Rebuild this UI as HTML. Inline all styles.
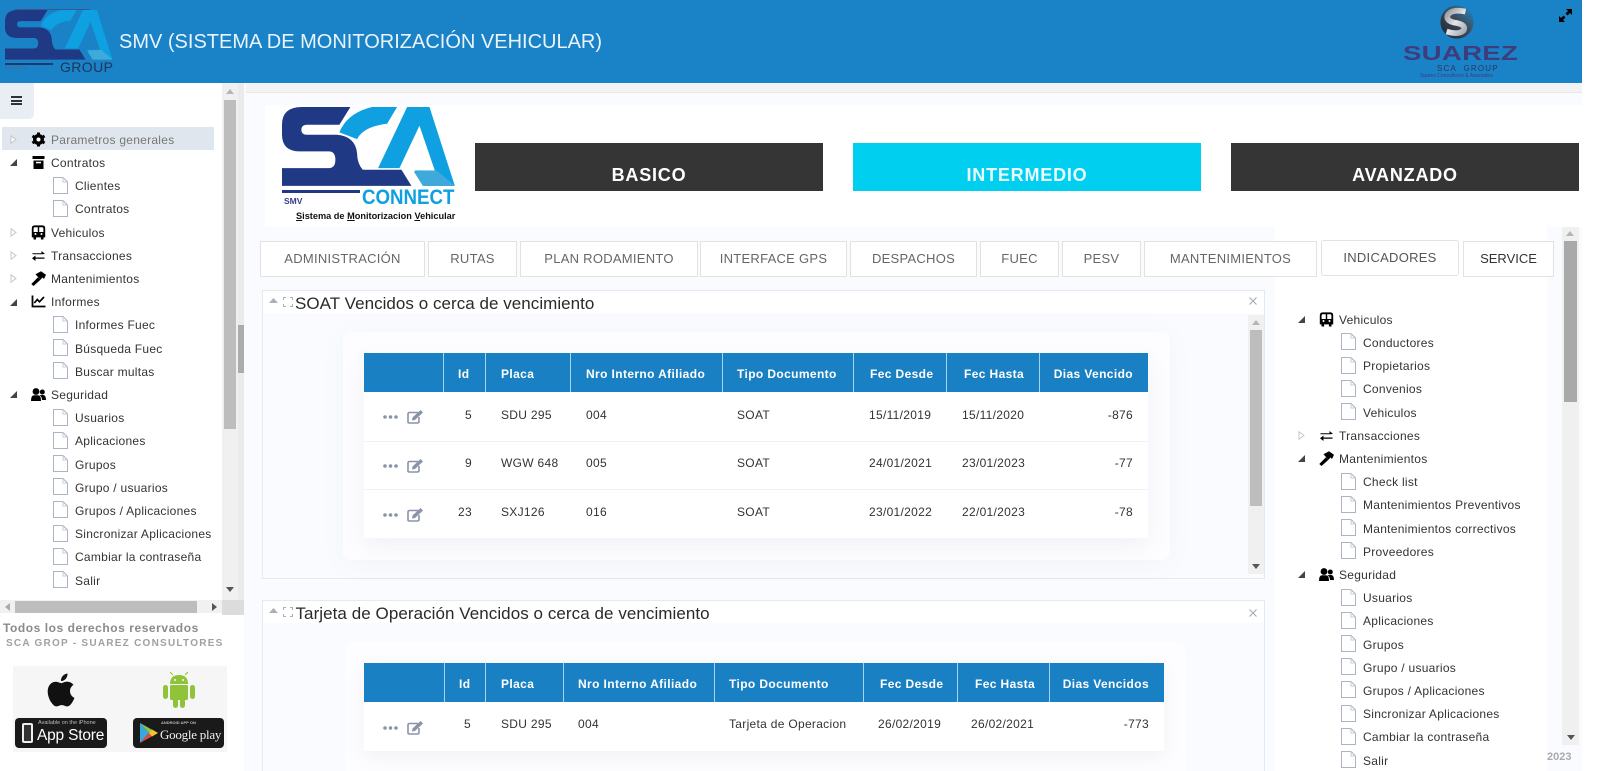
<!DOCTYPE html>
<html lang="es"><head><meta charset="utf-8"><title>SMV</title>
<style>
*{box-sizing:border-box}
html,body{margin:0;padding:0;width:1600px;height:771px;overflow:hidden;background:#fff;font-family:"Liberation Sans",sans-serif;color:#333}
#w{position:relative;width:1600px;height:771px;overflow:hidden}
.b{position:absolute}
.x{position:absolute;white-space:nowrap;line-height:16px}
.tree{position:absolute;top:.8px;width:240px;height:0}
.r{position:absolute;left:0;height:16px;width:240px;font-size:12px;letter-spacing:.27px;line-height:16px;color:#333;white-space:nowrap}
.r svg{position:absolute}
.r .a{left:10px;top:3.500px;width:7px;height:9px}
.r .i{left:31px;top:0;width:15px;height:15px}
.r .f{left:53px;top:-1.500px;width:15px;height:17px}
.r .l{position:absolute;left:51px;top:0}
.r .m{position:absolute;left:75px;top:0}
.tab{position:absolute;top:241px;height:36px;border:1px solid #e2e2e2;background:#fff;color:#666;font-size:13px;letter-spacing:.27px;line-height:34px;text-align:center;white-space:nowrap}
.big{position:absolute;top:143px;height:48px;width:348px;color:#fff;font-weight:bold;font-size:18px;letter-spacing:.8px;text-align:center;padding-top:20px;line-height:24px}
.th{position:absolute;white-space:nowrap;color:#fff;font-weight:bold;font-size:12px;letter-spacing:.38px;line-height:16px}
.td{position:absolute;white-space:nowrap;color:#333;font-size:12px;letter-spacing:.3px;line-height:16px}
.cl{position:absolute;width:1px;background:#a6d3f0}
.ln{position:absolute;height:1px;background:#f1f2f4}
.panel{position:absolute;background:#f9fbfe;border:1px solid #e6e9f0}
.phead{position:absolute;background:#fff}
.title{position:absolute;white-space:nowrap;font-size:17px;color:#2a2a2a;line-height:20px}
</style></head><body>
<div id="w">
<svg width="0" height="0" style="position:absolute">
<defs>
<symbol id="to" viewBox="0 0 7 9"><path d="M0 8L7 1V8Z" fill="#444"/></symbol>
<symbol id="tc" viewBox="0 0 7 9"><path d="M1 .8L6 4.500L1 8.200Z" fill="#fff" stroke="#c4c8cc"/></symbol>
<symbol id="file" viewBox="0 0 15 17"><path d="M.5.500H10L14.500 5V16.500H.5Z" fill="#fff" stroke="#aab4c2"/><path d="M10 .5V5H14.500" fill="none" stroke="#c5ccd6"/></symbol>
<symbol id="gear" viewBox="0 0 14 15"><g transform="translate(7 7.500)"><circle r="4" fill="none" stroke="#000" stroke-width="3"/><rect x="-1.500" y="-7" width="3" height="14" fill="#000"/><rect x="-1.500" y="-7" width="3" height="14" fill="#000" transform="rotate(60)"/><rect x="-1.500" y="-7" width="3" height="14" fill="#000" transform="rotate(120)"/><circle r="2" fill="#fff"/></g></symbol>
<symbol id="arch" viewBox="0 0 14 15"><path d="M1 1H13V4H1ZM2 5.500H12V14H2Z" fill="#000"/><rect x="4.500" y="6.800" width="5" height="1.500" fill="#fff"/></symbol>
<symbol id="bus" viewBox="0 0 14 15"><path d="M3 1.300H11Q12.800 1.300 12.800 3.500V11.500H1.200V3.500Q1.200 1.300 3 1.300Z" fill="#fff" stroke="#000" stroke-width="1.800"/><rect x="1" y="7" width="12" height="4.500" fill="#000"/><circle cx="4" cy="9" r="1" fill="#fff"/><circle cx="10" cy="9" r="1" fill="#fff"/><rect x="6.300" y="1" width="1.400" height="6" fill="#000"/><rect x="2" y="11" width="2.600" height="3.500" fill="#000"/><rect x="9.400" y="11" width="2.600" height="3.500" fill="#000"/></symbol>
<symbol id="swap" viewBox="0 0 14 15"><path d="M1 5.200H10V3L13.500 6 10 6.200H1ZM13 9.500H4V7.500L.5 10.200 4 13V10.800H13Z" fill="#000"/></symbol>
<symbol id="ham" viewBox="0 0 15 15"><path d="M.3 13L7 6.300 9.500 8.800 2.500 15Z" fill="#000"/><path d="M4.500 3.200L10 .3 15 3.800 13 8 11.500 6.500 9.500 8.800 6.300 5.200Z" fill="#000"/></symbol>
<symbol id="chart" viewBox="0 0 14 15"><path d="M1 1.500V12.500H14" fill="none" stroke="#000" stroke-width="1.800"/><path d="M2.800 9L5.800 5.500 8 7.800 12.500 3" fill="none" stroke="#000" stroke-width="1.700"/></symbol>
<symbol id="users" viewBox="0 0 15 15"><circle cx="5" cy="4.500" r="3.400" fill="#000"/><path d="M0 14Q0 8.500 3 8.300H7Q10 8.500 10 14Z" fill="#000"/><circle cx="11.300" cy="5" r="2.500" fill="#000"/><path d="M8.500 8.300Q9.500 7.800 12.500 8 15 8.500 15 13H11Q11 10 8.500 8.300Z" fill="#000"/></symbol>
<symbol id="edit" viewBox="0 0 18 15"><path d="M11 3.500H2.500Q1 3.500 1 5V13Q1 14 2.500 14H10Q12 14 12 12.500V8" fill="none" stroke="#8a93a8" stroke-width="1.600"/><path d="M5.500 8.500L13.500 1 16 3.500 8 11 5 11.500Z" fill="#8a93a8"/></symbol>
<symbol id="sca" viewBox="20 22 520 238" preserveAspectRatio="none">
<path fill="#1f3985" d="M225 22L80 22Q20 22 20 75L20 105Q20 155 75 155L160 155Q180 155 180 180Q180 205 160 205L20 205L20 258L408 258L378 210L262 210Q245 190 245 160Q240 110 185 105L95 105Q78 105 78 90Q78 75 95 75L192 75Z"/>
<path fill="#0ea0e0" d="M365 22L290 22Q215 40 192 98L245 118Q265 80 335 72Z"/>
<path fill="#0ea0e0" d="M395 22L462 22L538 258L445 258L418 212L478 212L432 78L372 205L308 205Z"/>
<path fill="#3fa9dc" d="M415 215L484 212L538 258L442 258Z"/>
</symbol>
<linearGradient id="glb" x1="0" y1="1" x2="1" y2="0"><stop offset="0" stop-color="#1b2330"/><stop offset=".55" stop-color="#3f4b5c"/><stop offset="1" stop-color="#1a8fcb"/></linearGradient>
<linearGradient id="glc" x1="0" y1="0" x2="1" y2="1"><stop offset="0" stop-color="#8f979f"/><stop offset=".5" stop-color="#e4e6e8"/><stop offset="1" stop-color="#9ea6ad"/></linearGradient>
</defs></svg>

<!-- header -->
<div class="b" style="left:0;top:0;width:1582px;height:83px;background:#1a82c7"></div>
<svg class="b" style="left:5px;top:10px" width="108" height="50"><use href="#sca" width="108" height="50"/></svg>
<div class="b" style="left:15px;top:9px;width:75px;height:1px;background:#345a90"></div>
<div class="b" style="left:5px;top:63px;width:48px;height:1.500px;background:#1f3a6a"></div>
<div class="x" style="left:5px;top:65px;font-size:5px;line-height:7px;color:#3e6f9f">Colombia</div>
<div class="x" style="left:60px;top:59px;font-size:14px;color:#1c3558;letter-spacing:.4px">GROUP</div>
<div class="x" style="left:119px;top:30px;font-size:20px;line-height:24px;color:#e9f4fc">SMV (SISTEMA DE MONITORIZACIÓN VEHICULAR)</div>
<svg class="b" style="left:1439px;top:4px" width="36" height="36" viewBox="0 0 38 38"><circle cx="19" cy="19" r="17.500" fill="url(#glb)"/><path d="M28 8Q13 5 9 12 7 18 18 20 29 22 26 28 21 33 8 29" fill="none" stroke="url(#glc)" stroke-width="6"/></svg>
<div class="x" style="left:1403px;top:44px;font-size:20px;line-height:20px;font-weight:bold;color:#3f3c7c;letter-spacing:.2px;transform:scaleX(1.380);transform-origin:0 0">SUAREZ</div>
<div class="x" style="left:1437px;top:64px;font-size:8px;line-height:9px;letter-spacing:1.200px;color:#2e3560">SCA &nbsp;GROUP</div>
<div class="x" style="left:1420px;top:73px;font-size:5px;line-height:6px;color:#3f3c7c">Suarez Consultores &amp; Asociados</div>
<svg class="b" style="left:1559px;top:9px" width="13" height="13" viewBox="0 0 13 13"><path d="M7 0H13V6L11 4 8.500 6.500 6.500 4.500 9 2ZM0 7L2 9 4.500 6.500 6.500 8.500 4 11 6 13H0Z" fill="#000"/></svg>

<!-- main background -->
<div class="b" style="left:244px;top:83px;width:1338px;height:688px;background:#f9fbfe"></div>
<div class="b" style="left:246px;top:83px;width:1336px;height:10px;background:#f3f3f3;border-bottom:1px solid #e8e8e8"></div>
<div class="b" style="left:265px;top:105px;width:1317px;height:122px;background:#fff"></div>
<div class="b" style="left:1275px;top:227px;width:272px;height:544px;background:#fff"></div>

<!-- left sidebar -->
<div class="b" style="left:0;top:83px;width:222px;height:517px;background:#fff"></div>
<div class="b" style="left:0;top:83px;width:34px;height:36px;background:#e9eef4;border-radius:0 0 5px 0"></div>
<div class="b" style="left:11px;top:96px;width:11px;height:2px;background:#2e3338"></div>
<div class="b" style="left:11px;top:99.500px;width:11px;height:2px;background:#2e3338"></div>
<div class="b" style="left:11px;top:103px;width:11px;height:2px;background:#2e3338"></div>
<div class="b" style="left:2px;top:127px;width:212px;height:23px;background:#dfe6ee"></div>
<div class="b" style="left:222px;top:83px;width:16px;height:517px;background:#f0f0f0"></div>
<div class="b" style="left:224px;top:100px;width:12px;height:329px;background:#bdbdbd"></div>
<div class="b" style="left:238px;top:83px;width:6px;height:532px;background:#ebebeb"></div>
<div class="b" style="left:238px;top:325px;width:6px;height:48px;background:#acacac"></div>
<svg class="b" style="left:226px;top:89px" width="8" height="5"><path d="M0 5L4 0 8 5Z" fill="#b5b5b5"/></svg>
<svg class="b" style="left:226px;top:587px" width="8" height="5"><path d="M0 0H8L4 5Z" fill="#555"/></svg>
<div class="b" style="left:0;top:600px;width:222px;height:13px;background:#f1f1f1"></div>
<div class="b" style="left:222px;top:600px;width:22px;height:15px;background:#dcdcdc"></div>
<div class="b" style="left:15px;top:601px;width:182px;height:12px;background:#bdbdbd"></div>
<svg class="b" style="left:5px;top:603px" width="5" height="8"><path d="M5 0V8L0 4Z" fill="#aaa"/></svg>
<svg class="b" style="left:212px;top:603px" width="5" height="8"><path d="M0 0V8L5 4Z" fill="#555"/></svg>

<div class="tree" style="left:0">
<div class="r" style="top:131px;color:#777"><svg class="a"><use href="#tc"/></svg><svg class="i"><use href="#gear"/></svg><span class="l">Parametros generales</span></div>
<div class="r" style="top:154.200px"><svg class="a"><use href="#to"/></svg><svg class="i"><use href="#arch"/></svg><span class="l">Contratos</span></div>
<div class="r" style="top:177.400px"><svg class="f"><use href="#file"/></svg><span class="m">Clientes</span></div>
<div class="r" style="top:200.600px"><svg class="f"><use href="#file"/></svg><span class="m">Contratos</span></div>
<div class="r" style="top:223.800px"><svg class="a"><use href="#tc"/></svg><svg class="i"><use href="#bus"/></svg><span class="l">Vehiculos</span></div>
<div class="r" style="top:247px"><svg class="a"><use href="#tc"/></svg><svg class="i"><use href="#swap"/></svg><span class="l">Transacciones</span></div>
<div class="r" style="top:270.200px"><svg class="a"><use href="#tc"/></svg><svg class="i"><use href="#ham"/></svg><span class="l">Mantenimientos</span></div>
<div class="r" style="top:293.400px"><svg class="a"><use href="#to"/></svg><svg class="i"><use href="#chart"/></svg><span class="l">Informes</span></div>
<div class="r" style="top:316.600px"><svg class="f"><use href="#file"/></svg><span class="m">Informes Fuec</span></div>
<div class="r" style="top:339.800px"><svg class="f"><use href="#file"/></svg><span class="m">Búsqueda Fuec</span></div>
<div class="r" style="top:363px"><svg class="f"><use href="#file"/></svg><span class="m">Buscar multas</span></div>
<div class="r" style="top:386.200px"><svg class="a"><use href="#to"/></svg><svg class="i"><use href="#users"/></svg><span class="l">Seguridad</span></div>
<div class="r" style="top:409.400px"><svg class="f"><use href="#file"/></svg><span class="m">Usuarios</span></div>
<div class="r" style="top:432.600px"><svg class="f"><use href="#file"/></svg><span class="m">Aplicaciones</span></div>
<div class="r" style="top:455.800px"><svg class="f"><use href="#file"/></svg><span class="m">Grupos</span></div>
<div class="r" style="top:479px"><svg class="f"><use href="#file"/></svg><span class="m">Grupo / usuarios</span></div>
<div class="r" style="top:502.200px"><svg class="f"><use href="#file"/></svg><span class="m">Grupos / Aplicaciones</span></div>
<div class="r" style="top:525.400px"><svg class="f"><use href="#file"/></svg><span class="m">Sincronizar Aplicaciones</span></div>
<div class="r" style="top:548.600px"><svg class="f"><use href="#file"/></svg><span class="m">Cambiar la contraseña</span></div>
<div class="r" style="top:571.800px"><svg class="f"><use href="#file"/></svg><span class="m">Salir</span></div>
</div>

<!-- footer left -->
<div class="b" style="left:0;top:615px;width:244px;height:156px;background:#fff"></div>
<div class="x" style="left:3px;top:620px;font-size:12px;font-weight:bold;color:#8a8a8a;letter-spacing:.55px">Todos los derechos reservados</div>
<div class="x" style="left:6px;top:636px;font-size:10px;font-weight:bold;color:#a0a0a0;letter-spacing:1.250px">SCA GROP - SUAREZ CONSULTORES</div>
<div class="b" style="left:13px;top:666px;width:214px;height:86px;background:#f6f6f6"></div>
<svg class="b" style="left:46px;top:672px" width="30" height="36" viewBox="0 0 30 36"><path fill="#111" d="M24 19c0-4 3.300-6 3.500-6.100-1.900-2.800-4.900-3.200-6-3.200-2.500-.3-5 1.500-6.200 1.500-1.300 0-3.300-1.500-5.400-1.400C7 9.800 4.500 11.300 3.100 13.800c-2.900 5-.7 12.400 2.100 16.500 1.400 2 3 4.200 5.200 4.100 2.100-.1 2.900-1.300 5.400-1.300s3.200 1.300 5.400 1.300c2.300 0 3.700-2 5-4 1.600-2.300 2.200-4.500 2.300-4.600-.1 0-4.500-1.700-4.500-6.800zM19.800 6.700c1.100-1.400 1.900-3.300 1.700-5.200-1.600.1-3.600 1.100-4.800 2.500-1 1.200-2 3.200-1.700 5 1.800.1 3.700-.9 4.800-2.300z"/></svg>
<svg class="b" style="left:163px;top:672px" width="32" height="37" viewBox="0 0 32 37"><g fill="#8fc43a"><path d="M7 12Q7 3 16 3T25 12Z"/><rect x="7" y="13" width="18" height="15" rx="1.500"/><rect x="0" y="13" width="5" height="14" rx="2.500"/><rect x="27" y="13" width="5" height="14" rx="2.500"/><rect x="10" y="26" width="5" height="10" rx="2.500"/><rect x="17" y="26" width="5" height="10" rx="2.500"/></g><path d="M10 3L7 0M22 3L25 0" stroke="#8fc43a"/><circle cx="12" cy="8" r="1" fill="#f6f6f6"/><circle cx="20" cy="8" r="1" fill="#f6f6f6"/></svg>
<div class="b" style="left:15px;top:718px;width:92px;height:30px;background:#1a1a1a;border-radius:4px"></div>
<div class="b" style="left:22px;top:723px;width:11px;height:20px;border:2px solid #eee;border-radius:2px;background:#333"></div>
<div class="x" style="left:38px;top:720px;font-size:5.500px;line-height:7px;color:#bbb">Available on the iPhone</div>
<div class="x" style="left:37px;top:727px;font-size:15.500px;line-height:18px;color:#fff;letter-spacing:-.2px">App Store</div>
<div class="b" style="left:133px;top:718px;width:91px;height:30px;background:#1a1a1a;border-radius:4px"></div>
<svg class="b" style="left:140px;top:723px" width="18" height="20" viewBox="0 0 18 20"><path d="M0 0L9 10 0 20Z" fill="#3aa8e0"/><path d="M0 0L18 10H9Z" fill="#8bc34a"/><path d="M0 20L18 10H9Z" fill="#e54a3c"/><path d="M18 10L12 6.500 9 10 12 13.500Z" fill="#f4c430"/></svg>
<div class="x" style="left:161px;top:720px;font-size:4px;line-height:6px;font-weight:bold;color:#bbb">ANDROID APP ON</div>
<div class="x" style="left:160px;top:726px;font-size:13px;line-height:18px;color:#eee;font-family:'Liberation Serif',serif;letter-spacing:-.25px">Google play</div>

<!-- SCA big logo -->
<svg class="b" style="left:281.700px;top:107px" width="173.500" height="79.500"><use href="#sca" width="173.500" height="79.500"/></svg>
<div class="b" style="left:281.700px;top:190px;width:78.300px;height:3.300px;background:#1f3985"></div>
<div class="x" style="left:362px;top:187.500px;font-size:21px;line-height:20px;font-weight:bold;color:#0ea0e0;transform:scaleX(.89);transform-origin:0 0">CONNECT</div>
<div class="x" style="left:284px;top:196px;font-size:8.500px;line-height:11px;font-weight:bold;color:#3a3a90">SMV</div>
<div class="x" style="left:296px;top:210px;font-size:9.200px;line-height:12px;font-weight:bold;color:#111"><u>S</u>istema de <u>M</u>onitorizacion <u>V</u>ehicular</div>

<!-- big buttons -->
<div class="big" style="left:475px;background:#353535">BASICO</div>
<div class="big" style="left:853px;background:#00cfef;color:#e8fbff">INTERMEDIO</div>
<div class="big" style="left:1231px;background:#353535">AVANZADO</div>

<!-- tabs -->
<div class="tab" style="left:260px;width:165px">ADMINISTRACIÓN</div>
<div class="tab" style="left:428px;width:89px">RUTAS</div>
<div class="tab" style="left:520px;width:178px">PLAN RODAMIENTO</div>
<div class="tab" style="left:700px;width:147px">INTERFACE GPS</div>
<div class="tab" style="left:850px;width:127px">DESPACHOS</div>
<div class="tab" style="left:980px;width:79px">FUEC</div>
<div class="tab" style="left:1062px;width:79px">PESV</div>
<div class="tab" style="left:1144px;width:173px">MANTENIMIENTOS</div>
<div class="tab" style="left:1321px;top:240px;width:138px;border-radius:3px;color:#555">INDICADORES</div>
<div class="tab" style="left:1463px;width:91px;color:#333;letter-spacing:0">SERVICE</div>

<!-- panel 1 -->
<div class="panel" style="left:262px;top:290px;width:1003px;height:289px"></div>
<div class="phead" style="left:263px;top:291px;width:1001px;height:22px"></div>
<svg class="b" style="left:269px;top:298px" width="9" height="5"><path d="M0 5L4.500 0 9 5Z" fill="#a9b0bb"/></svg>
<svg class="b" style="left:283px;top:297px" width="10" height="10" viewBox="0 0 10 10"><path d="M.5 3V.5H3M7 .5H9.500V3M9.500 7V9.500H7M3 9.500H.5V7" fill="none" stroke="#a9b0bb"/></svg>
<div class="title" style="left:295px;top:294px;letter-spacing:.04px">SOAT Vencidos o cerca de vencimiento</div>
<svg class="b" style="left:1249px;top:297px" width="8" height="8"><path d="M.5.500L7.500 7.500M7.500.500L.5 7.500" stroke="#a3adbb" stroke-width="1.200"/></svg>
<div class="b" style="left:1248px;top:315px;width:16px;height:259px;background:#f0f0f0"></div>
<div class="b" style="left:1250px;top:330px;width:12px;height:176px;background:#bdbdbd"></div>
<svg class="b" style="left:1252px;top:320px" width="8" height="5"><path d="M0 5L4 0 8 5Z" fill="#b5b5b5"/></svg>
<svg class="b" style="left:1252px;top:564px" width="8" height="5"><path d="M0 0H8L4 5Z" fill="#555"/></svg>
<div class="b" style="left:343px;top:332px;width:827px;height:228px;background:#fdfdff;border-radius:8px;box-shadow:0 4px 24px rgba(120,130,160,.05)"></div>
<div class="b" style="left:364px;top:353px;width:784px;height:185px;background:#fff;box-shadow:0 8px 22px rgba(90,100,130,.07)"></div>
<div class="b" style="left:364px;top:353px;width:784px;height:39px;background:#1a80c4"></div>
<div class="cl" style="left:443px;top:353px;height:39px"></div>
<div class="cl" style="left:485px;top:353px;height:39px"></div>
<div class="cl" style="left:570px;top:353px;height:39px"></div>
<div class="cl" style="left:722px;top:353px;height:39px"></div>
<div class="cl" style="left:853px;top:353px;height:39px"></div>
<div class="cl" style="left:946px;top:353px;height:39px"></div>
<div class="cl" style="left:1039px;top:353px;height:39px"></div>
<div class="th" style="left:458px;top:366px">Id</div>
<div class="th" style="left:501px;top:366px">Placa</div>
<div class="th" style="left:586px;top:366px">Nro Interno Afiliado</div>
<div class="th" style="left:737px;top:366px">Tipo Documento</div>
<div class="th" style="left:870px;top:366px">Fec Desde</div>
<div class="th" style="left:964px;top:366px">Fec Hasta</div>
<div class="th" style="right:467px;top:366px">Dias Vencido</div>
<div class="ln" style="left:364px;top:441px;width:784px"></div>
<div class="ln" style="left:364px;top:489px;width:784px"></div>

<svg class="b" style="left:383px;top:415px" width="15" height="4" fill="#8a93a8"><circle cx="2" cy="2" r="1.800"/><circle cx="7.500" cy="2" r="1.800"/><circle cx="13" cy="2" r="1.800"/></svg>
<svg class="b" style="left:407px;top:409px" width="18" height="15"><use href="#edit"/></svg>
<div class="td" style="right:1128px;top:407px">5</div>
<div class="td" style="left:501px;top:407px">SDU 295</div>
<div class="td" style="left:586px;top:407px">004</div>
<div class="td" style="left:737px;top:407px">SOAT</div>
<div class="td" style="left:869px;top:407px">15/11/2019</div>
<div class="td" style="left:962px;top:407px">15/11/2020</div>
<div class="td" style="right:467px;top:407px">-876</div>

<svg class="b" style="left:383px;top:464px" width="15" height="4" fill="#8a93a8"><circle cx="2" cy="2" r="1.800"/><circle cx="7.500" cy="2" r="1.800"/><circle cx="13" cy="2" r="1.800"/></svg>
<svg class="b" style="left:407px;top:458px" width="18" height="15"><use href="#edit"/></svg>
<div class="td" style="right:1128px;top:455px">9</div>
<div class="td" style="left:501px;top:455px">WGW 648</div>
<div class="td" style="left:586px;top:455px">005</div>
<div class="td" style="left:737px;top:455px">SOAT</div>
<div class="td" style="left:869px;top:455px">24/01/2021</div>
<div class="td" style="left:962px;top:455px">23/01/2023</div>
<div class="td" style="right:467px;top:455px">-77</div>

<svg class="b" style="left:383px;top:513px" width="15" height="4" fill="#8a93a8"><circle cx="2" cy="2" r="1.800"/><circle cx="7.500" cy="2" r="1.800"/><circle cx="13" cy="2" r="1.800"/></svg>
<svg class="b" style="left:407px;top:507px" width="18" height="15"><use href="#edit"/></svg>
<div class="td" style="right:1128px;top:504px">23</div>
<div class="td" style="left:501px;top:504px">SXJ126</div>
<div class="td" style="left:586px;top:504px">016</div>
<div class="td" style="left:737px;top:504px">SOAT</div>
<div class="td" style="left:869px;top:504px">23/01/2022</div>
<div class="td" style="left:962px;top:504px">22/01/2023</div>
<div class="td" style="right:467px;top:504px">-78</div>

<!-- panel 2 -->
<div class="panel" style="left:262px;top:600px;width:1003px;height:180px"></div>
<div class="phead" style="left:263px;top:601px;width:1001px;height:22px"></div>
<svg class="b" style="left:269px;top:608px" width="9" height="5"><path d="M0 5L4.500 0 9 5Z" fill="#a9b0bb"/></svg>
<svg class="b" style="left:283px;top:607px" width="10" height="10" viewBox="0 0 10 10"><path d="M.5 3V.5H3M7 .5H9.500V3M9.500 7V9.500H7M3 9.500H.5V7" fill="none" stroke="#a9b0bb"/></svg>
<div class="title" style="left:295.500px;top:604px;letter-spacing:.06px">Tarjeta de Operación Vencidos o cerca de vencimiento</div>
<svg class="b" style="left:1249px;top:609px" width="8" height="8"><path d="M.5.500L7.500 7.500M7.500.500L.5 7.500" stroke="#a3adbb" stroke-width="1.200"/></svg>
<div class="b" style="left:345px;top:642px;width:841px;height:129px;background:#fdfdff;border-radius:8px 8px 0 0"></div>
<div class="b" style="left:364px;top:663px;width:800px;height:88px;background:#fff;box-shadow:0 6px 18px rgba(90,100,130,.07)"></div>
<div class="b" style="left:364px;top:663px;width:800px;height:39px;background:#1a80c4"></div>
<div class="cl" style="left:444px;top:663px;height:39px"></div>
<div class="cl" style="left:485px;top:663px;height:39px"></div>
<div class="cl" style="left:563px;top:663px;height:39px"></div>
<div class="cl" style="left:714px;top:663px;height:39px"></div>
<div class="cl" style="left:863px;top:663px;height:39px"></div>
<div class="cl" style="left:957px;top:663px;height:39px"></div>
<div class="cl" style="left:1049px;top:663px;height:39px"></div>
<div class="th" style="left:459px;top:676px">Id</div>
<div class="th" style="left:501px;top:676px">Placa</div>
<div class="th" style="left:578px;top:676px">Nro Interno Afiliado</div>
<div class="th" style="left:729px;top:676px">Tipo Documento</div>
<div class="th" style="left:880px;top:676px">Fec Desde</div>
<div class="th" style="left:975px;top:676px">Fec Hasta</div>
<div class="th" style="right:451px;top:676px">Dias Vencidos</div>
<svg class="b" style="left:383px;top:726px" width="15" height="4" fill="#8a93a8"><circle cx="2" cy="2" r="1.800"/><circle cx="7.500" cy="2" r="1.800"/><circle cx="13" cy="2" r="1.800"/></svg>
<svg class="b" style="left:407px;top:720px" width="18" height="15"><use href="#edit"/></svg>
<div class="td" style="right:1129px;top:716px">5</div>
<div class="td" style="left:501px;top:716px">SDU 295</div>
<div class="td" style="left:578px;top:716px">004</div>
<div class="td" style="left:729px;top:716px">Tarjeta de Operacion</div>
<div class="td" style="left:878px;top:716px">26/02/2019</div>
<div class="td" style="left:971px;top:716px">26/02/2021</div>
<div class="td" style="right:451px;top:716px">-773</div>

<!-- right tree -->
<div class="tree" style="left:1288px">
<div class="r" style="top:311px"><svg class="a"><use href="#to"/></svg><svg class="i"><use href="#bus"/></svg><span class="l">Vehiculos</span></div>
<div class="r" style="top:334.200px"><svg class="f"><use href="#file"/></svg><span class="m">Conductores</span></div>
<div class="r" style="top:357.400px"><svg class="f"><use href="#file"/></svg><span class="m">Propietarios</span></div>
<div class="r" style="top:380.600px"><svg class="f"><use href="#file"/></svg><span class="m">Convenios</span></div>
<div class="r" style="top:403.800px"><svg class="f"><use href="#file"/></svg><span class="m">Vehiculos</span></div>
<div class="r" style="top:427px"><svg class="a"><use href="#tc"/></svg><svg class="i"><use href="#swap"/></svg><span class="l">Transacciones</span></div>
<div class="r" style="top:450.200px"><svg class="a"><use href="#to"/></svg><svg class="i"><use href="#ham"/></svg><span class="l">Mantenimientos</span></div>
<div class="r" style="top:473.400px"><svg class="f"><use href="#file"/></svg><span class="m">Check list</span></div>
<div class="r" style="top:496.600px"><svg class="f"><use href="#file"/></svg><span class="m">Mantenimientos Preventivos</span></div>
<div class="r" style="top:519.800px"><svg class="f"><use href="#file"/></svg><span class="m">Mantenimientos correctivos</span></div>
<div class="r" style="top:543px"><svg class="f"><use href="#file"/></svg><span class="m">Proveedores</span></div>
<div class="r" style="top:566.200px"><svg class="a"><use href="#to"/></svg><svg class="i"><use href="#users"/></svg><span class="l">Seguridad</span></div>
<div class="r" style="top:589.400px"><svg class="f"><use href="#file"/></svg><span class="m">Usuarios</span></div>
<div class="r" style="top:612.600px"><svg class="f"><use href="#file"/></svg><span class="m">Aplicaciones</span></div>
<div class="r" style="top:635.800px"><svg class="f"><use href="#file"/></svg><span class="m">Grupos</span></div>
<div class="r" style="top:659px"><svg class="f"><use href="#file"/></svg><span class="m">Grupo / usuarios</span></div>
<div class="r" style="top:682.200px"><svg class="f"><use href="#file"/></svg><span class="m">Grupos / Aplicaciones</span></div>
<div class="r" style="top:705.400px"><svg class="f"><use href="#file"/></svg><span class="m">Sincronizar Aplicaciones</span></div>
<div class="r" style="top:728.600px"><svg class="f"><use href="#file"/></svg><span class="m">Cambiar la contraseña</span></div>
<div class="r" style="top:751.800px"><svg class="f"><use href="#file"/></svg><span class="m">Salir</span></div>
</div>

<!-- right scrollbar -->
<div class="b" style="left:1562px;top:227px;width:17px;height:518px;background:#f0f0f0"></div>
<div class="b" style="left:1564px;top:241px;width:13px;height:161px;background:#a9a9a9"></div>
<svg class="b" style="left:1566px;top:231px" width="8" height="5"><path d="M0 5L4 0 8 5Z" fill="#b5b5b5"/></svg>
<svg class="b" style="left:1567px;top:735px" width="8" height="5"><path d="M0 0H8L4 5Z" fill="#555"/></svg>
<div class="x" style="left:1547px;top:749px;font-size:11px;font-weight:bold;color:#aaa">2023</div>
</div>
</body></html>
